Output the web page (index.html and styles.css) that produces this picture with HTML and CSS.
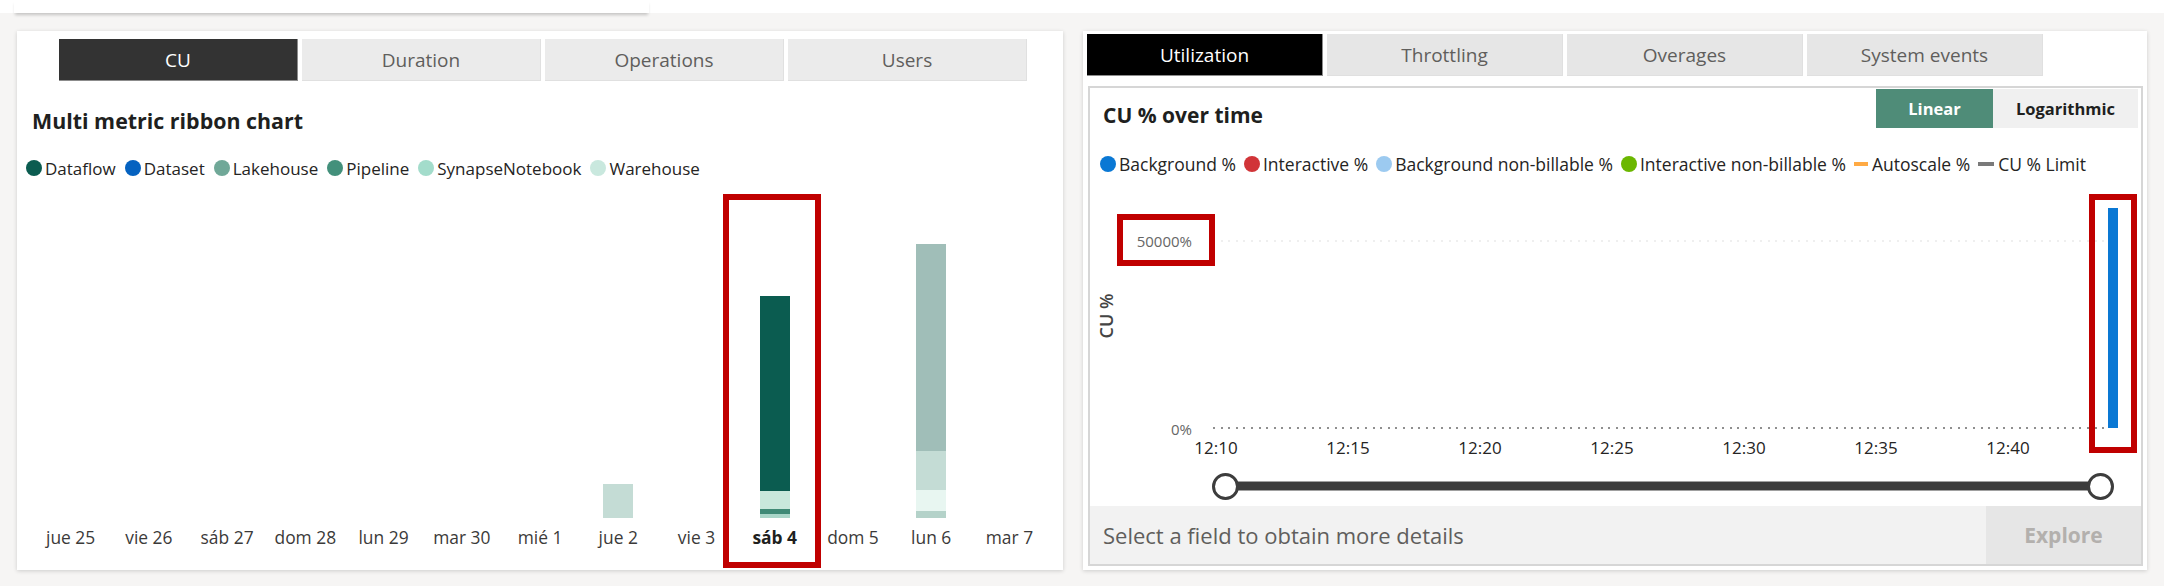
FILE: index.html
```html
<!DOCTYPE html>
<html lang="es">
<head>
<meta charset="utf-8">
<title>Capacity metrics</title>
<link rel="stylesheet" href="styles.css">
</head>
<body>
<div class="top"><div class="top-card"></div></div>
<div class="main">
  <section class="card card-left">
    <div class="tabs tabs-left">
      <div class="tab active">CU</div>
      <div class="tab">Duration</div>
      <div class="tab">Operations</div>
      <div class="tab">Users</div>
    </div>
    <h2 class="title title-left">Multi metric ribbon chart</h2>
    <div class="legend legend-left">
      <span class="li"><i class="dot c-dataflow"></i>Dataflow</span>
      <span class="li"><i class="dot c-dataset"></i>Dataset</span>
      <span class="li"><i class="dot c-lakehouse"></i>Lakehouse</span>
      <span class="li"><i class="dot c-pipeline"></i>Pipeline</span>
      <span class="li"><i class="dot c-synapse"></i>SynapseNotebook</span>
      <span class="li"><i class="dot c-warehouse"></i>Warehouse</span>
    </div>
    <div class="ribbon">
      <div class="col"><div class="stack"></div><div class="xl">jue 25</div></div>
      <div class="col"><div class="stack"></div><div class="xl">vie 26</div></div>
      <div class="col"><div class="stack"></div><div class="xl">sáb 27</div></div>
      <div class="col"><div class="stack"></div><div class="xl">dom 28</div></div>
      <div class="col"><div class="stack"></div><div class="xl">lun 29</div></div>
      <div class="col"><div class="stack"></div><div class="xl">mar 30</div></div>
      <div class="col"><div class="stack"></div><div class="xl">mié 1</div></div>
      <div class="col"><div class="stack"><div class="seg s-w1" style="height:34px"></div></div><div class="xl">jue 2</div></div>
      <div class="col"><div class="stack"></div><div class="xl">vie 3</div></div>
      <div class="col"><div class="stack">
        <div class="seg s-dataflow" style="height:195px"></div>
        <div class="seg s-ware" style="height:18px"></div>
        <div class="seg s-pipe" style="height:5px"></div>
        <div class="seg s-syn" style="height:4px"></div>
      </div><div class="xl xl-bold">sáb 4</div></div>
      <div class="col"><div class="stack"></div><div class="xl">dom 5</div></div>
      <div class="col"><div class="stack">
        <div class="seg s-lake" style="height:207px"></div>
        <div class="seg s-w1" style="height:39px"></div>
        <div class="seg s-w2" style="height:21px"></div>
        <div class="seg s-w3" style="height:7px"></div>
      </div><div class="xl">lun 6</div></div>
      <div class="col"><div class="stack"></div><div class="xl">mar 7</div></div>
    </div>
    <div class="mark mark-day"></div>
  </section>

  <section class="card card-right">
    <div class="tabs tabs-right">
      <div class="tab active">Utilization</div>
      <div class="tab">Throttling</div>
      <div class="tab">Overages</div>
      <div class="tab">System events</div>
    </div>
    <div class="chart-box">
      <div class="chart-head">
        <h2 class="title title-right">CU % over time</h2>
        <div class="scale">
          <div class="scale-btn on">Linear</div>
          <div class="scale-btn">Logarithmic</div>
        </div>
      </div>
      <div class="legend legend-right">
        <span class="li"><i class="dot c-bg"></i>Background %</span>
        <span class="li"><i class="dot c-int"></i>Interactive %</span>
        <span class="li"><i class="dot c-bgnb"></i>Background non-billable %</span>
        <span class="li"><i class="dot c-intnb"></i>Interactive non-billable %</span>
        <span class="li"><i class="dash c-auto"></i>Autoscale %</span>
        <span class="li"><i class="dash c-limit"></i>CU % Limit</span>
      </div>
      <div class="plot">
        <div class="ytitle">CU %</div>
        <div class="ylab ylab-top">50000%</div>
        <div class="ylab ylab-zero">0%</div>
        <div class="grid grid-top"></div>
        <div class="grid grid-zero"></div>
        <div class="cu-bar"></div>
        <div class="tl" style="left:126px">12:10</div>
        <div class="tl" style="left:258px">12:15</div>
        <div class="tl" style="left:390px">12:20</div>
        <div class="tl" style="left:522px">12:25</div>
        <div class="tl" style="left:654px">12:30</div>
        <div class="tl" style="left:786px">12:35</div>
        <div class="tl" style="left:918px">12:40</div>
        <div class="track"></div>
        <div class="knob knob-l"></div>
        <div class="knob knob-r"></div>
      </div>
      <div class="details">
        <div class="details-text">Select a field to obtain more details</div>
        <div class="explore">Explore</div>
      </div>
      <div class="mark mark-label"></div>
      <div class="mark mark-bar"></div>
    </div>
  </section>
</div>
</body>
</html>
```

FILE: styles.css
```css
* { box-sizing: border-box; margin: 0; padding: 0; }
html, body { width: 2164px; height: 586px; overflow: hidden; }
body {
  background: #f6f5f4;
  font-family: "Open Sans", "Noto Sans", sans-serif;
  color: #252423;
}

.top { height: 13px; background: #fff; position: relative; z-index: 1; }
.top-card {
  margin-left: 14px; width: 635px; height: 13px; background: #fff;
  box-shadow: 0 3px 3px -1px rgba(0,0,0,0.2);
}

.main { display: flex; gap: 20px; padding: 18px 0 0 17px; }

.card {
  background: #fff; height: 539px; position: relative;
  box-shadow: 0 1px 4px rgba(0,0,0,0.17);
}
.card-left { width: 1046px; padding-top: 8px; }
.card-right { width: 1064px; padding: 3px 0 0 4px; }

/* tabs */
.tabs { display: flex; gap: 4px; }
.tabs-left { padding-left: 42px; }
.tab {
  height: 42px; display: flex; align-items: center; justify-content: center;
  font-size: 19px; color: #605e5c; background: #ebebeb;
  border-right: 1px solid #e0e0e0; border-bottom: 1px solid #e0e0e0;
}
.tabs-left .tab { width: 239px; }
.tabs-right .tab { width: 236px; background: #e6e6e6; }
.tabs-left .tab.active { background: #333; color: #fff; border-color: #8c8c8c; }
.tabs-right .tab.active { background: #000; color: #fff; border-color: #8c8c8c; }

.title { font-size: 21px; font-weight: 700; line-height: 26px; color: #201f1e; }
.title-left { margin: 27px 0 0 15px; font-size: 21.4px; }

/* legend */
.legend { display: flex; align-items: center; height: 26px; font-size: 17px; color: #252423; white-space: nowrap; }
.legend-left { margin-top: 21px; padding-left: 9px; gap: 9px; }
.legend-right { margin-top: 23px; padding-left: 10px; gap: 8px; font-size: 17.5px; }
.li { display: flex; align-items: center; }
.dot { display: block; width: 16px; height: 16px; border-radius: 50%; margin-right: 3px; }
.dash { display: block; width: 14px; height: 4px; margin-right: 4px; }
.c-dataflow { background: #0b5c50; }
.c-dataset { background: #0562c0; }
.c-lakehouse { background: #70a898; }
.c-pipeline { background: #43907b; }
.c-synapse { background: #a3dccb; }
.c-warehouse { background: #c9e8de; }
.c-bg { background: #0a78d4; }
.c-int { background: #d13438; }
.c-bgnb { background: #9ccaf0; }
.c-intnb { background: #6bb700; }
.c-auto { background: #ffaa44; }
.c-limit { background: #7a7a7a; width: 16px; }

/* ribbon chart */
.ribbon { display: flex; margin-left: 14.5px; width: 1017px; height: 375px; }
.col { flex: 1; display: flex; flex-direction: column; justify-content: flex-end; align-items: center; }
.stack { width: 30px; display: flex; flex-direction: column; }
.seg { width: 30px; }
.s-dataflow { background: #0b5c50; }
.s-ware { background: #c8e8dc; }
.s-pipe { background: #3f8a76; }
.s-syn { background: #a9d6c8; }
.s-lake { background: #a0beb8; }
.s-w1 { background: #c4dcd5; }
.s-w2 { background: #e8f6f1; }
.s-w3 { background: #b4d2c9; }
.xl { height: 38px; line-height: 38px; font-size: 17.4px; color: #3b3a39; white-space: nowrap; }
.xl-bold { font-weight: 700; color: #201f1e; }

/* annotation boxes */
.mark { position: absolute; border: 6px solid #c00000; z-index: 3; }
.mark-day { left: 706px; top: 163px; width: 98px; height: 374px; }
.mark-label { left: 27px; top: 126px; width: 98px; height: 52px; }
.mark-bar { left: 999px; top: 106px; width: 48px; height: 259px; }

/* right chart */
.chart-box {
  margin: 10px 0 0 1px; width: 1055px; height: 480px;
  border: 2px solid #d6d6d6; position: relative;
  display: flex; flex-direction: column;
}
.chart-head { display: flex; justify-content: space-between; align-items: flex-start; height: 40px; padding: 0 3px 0 13px; }
.title-right { margin-top: 14px; }
.scale { display: flex; margin-top: 1px; }
.scale-btn {
  height: 39px; display: flex; align-items: center; justify-content: center;
  font-size: 16.5px; font-weight: 700; background: #f0f0f0; color: #201f1e; width: 145px;
}
.scale-btn.on { background: #4f8c78; color: #fff; width: 117px; }

.plot { position: relative; flex: 1; }
.ytitle {
  position: absolute; left: 16px; top: 139px; transform: translate(-50%, -50%) rotate(-90deg);
  font-size: 18px; font-weight: 600; color: #444; white-space: nowrap;
}
.ylab { position: absolute; right: calc(100% - 102px); font-size: 15px; color: #666; transform: translateY(-50%); line-height: 20px; }
.ylab-top { top: 64px; }
.ylab-zero { top: 252px; }
.grid { position: absolute; left: 123px; width: 897px; height: 2px; }
.grid-top { top: 63px; background: repeating-linear-gradient(to right, #efefef 0 2px, transparent 2px 7.6px); }
.grid-zero { top: 250px; background: repeating-linear-gradient(to right, #8f8f8f 0 2px, transparent 2px 7.6px); }
.cu-bar { position: absolute; left: 1018px; top: 31px; width: 10px; height: 220px; background: #0a78d4; }
.tl { position: absolute; top: 271px; transform: translate(-50%, -50%); font-size: 17px; color: #252423; line-height: 22px; }
.track { position: absolute; left: 135px; width: 875px; top: 305px; height: 8px; background: #3c3c3c; box-shadow: 0 0 0 1px #a0a0a0; }
.knob {
  position: absolute; top: 296px; width: 27px; height: 27px; border-radius: 50%;
  background: #fff; border: 3px solid #3d3d3d; z-index: 1;
}
.knob-l { left: 122px; }
.knob-r { left: 997px; }

.details { display: flex; height: 58px; }
.details-text {
  flex: 1; background: #f2f2f2; display: flex; align-items: center; padding-left: 13px;
  font-size: 22px; color: #605e5c;
}
.explore {
  width: 155px; background: #e6e6e6; display: flex; align-items: center; justify-content: center;
  font-size: 21px; font-weight: 700; color: #b3b0ad;
}
```
